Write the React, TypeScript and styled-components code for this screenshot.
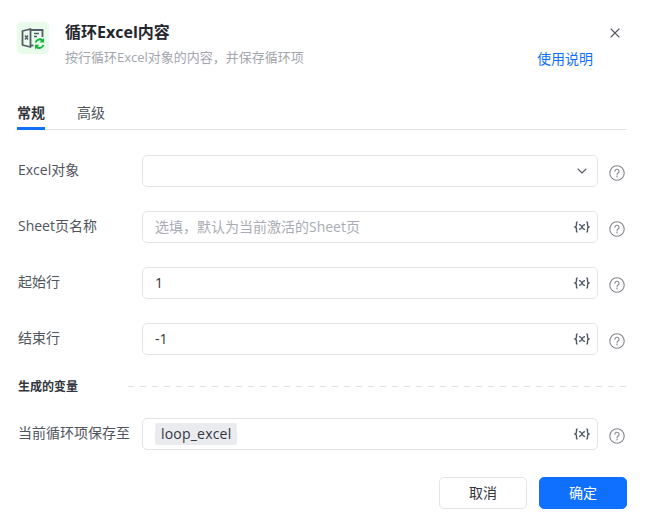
import React from "react"
import styled, { createGlobalStyle } from "styled-components"
import { ChevronDown, X } from "lucide-react"

const GlobalStyle = createGlobalStyle`
	html, body {
		margin: 0;
		padding: 0;
		background: #fff;
	}
	* {
		box-sizing: border-box;
	}
	body {
		font-family: "Open Sans", "Noto Sans CJK SC", sans-serif;
	}
`

const Dialog = styled.div`
	width: 646px;
	height: 524px;
	padding: 22px 19px 0 17px;
	background: #fff;
	overflow: hidden;
`

const Header = styled.div`
	display: flex;
	height: 47px;
`

const AppIcon = styled.div`
	width: 32px;
	height: 32px;
	border-radius: 5px;
	background: #e9fbea;
	display: flex;
`

const HeaderText = styled.div`
	margin-left: 16px;
	flex: 1;
`

const Title = styled.div`
	margin-top: -1px;
	font-size: 16px;
	line-height: 22px;
	font-weight: 700;
	color: #24272e;
`

const Description = styled.div`
	margin-top: 5px;
	font-size: 13px;
	line-height: 18px;
	color: #a3a6ae;
`

const HeaderSide = styled.div`
	width: 90px;
	display: flex;
	flex-direction: column;
	align-items: flex-end;
`

const CloseButton = styled.div`
	height: 22px;
	margin-top: 1px;
	color: #565b66;
	margin-right: 4px;
	display: flex;
	align-items: center;
`

const HelpLink = styled.a`
	margin-top: 6px;
	margin-right: 34px;
	font-size: 14px;
	line-height: 20px;
	color: #0f6fff;
	white-space: nowrap;
`

const Tabs = styled.div`
	margin-top: 26px;
	display: flex;
	gap: 32px;
	height: 35px;
	border-bottom: 1px solid #e4e5e9;
`

const Tab = styled.div<{ $active?: boolean }>`
	height: 35px;
	font-size: 14px;
	line-height: 20px;
	padding-top: 8px;
	font-weight: ${(p) => (p.$active ? 700 : 400)};
	color: ${(p) => (p.$active ? "#33363d" : "#50545c")};
	border-bottom: 3px solid ${(p) => (p.$active ? "#0f6fff" : "transparent")};
`

const Form = styled.div`
	margin-top: 25px;
`

const Row = styled.div`
	display: flex;
	align-items: center;
	height: 32px;
	margin-bottom: 24px;
`

const Label = styled.div`
	width: 124px;
	margin-left: 1px;
	margin-bottom: 4px;
	flex-shrink: 0;
	font-size: 14px;
	color: #50545c;
	white-space: nowrap;
`

const Field = styled.div`
	width: 456px;
	height: 32px;
	padding: 0 7px 0 12px;
	display: flex;
	align-items: center;
	justify-content: space-between;
	border: 1px solid #e4e5ea;
	border-radius: 5px;
	font-size: 14px;
	color: #33363d;
`

const Value = styled.span`
	margin-bottom: 2px;
`

const Placeholder = styled(Value)`
	color: #a9acb4;
`

const VarIcon = styled.span`
	width: 16px;
	height: 16px;
	display: flex;
	align-items: center;
	justify-content: center;
	color: #4c5665;
	margin-left: auto;
`

const ChevronWrap = styled.span`
	color: #565b66;
	margin-left: auto;
	display: flex;
`

const Help = styled.span`
	margin-left: 11px;
	display: flex;
	margin-top: 3px;
`

const Section = styled.div`
	display: flex;
	align-items: center;
	height: 20px;
	margin-top: -3px;
	margin-bottom: 22px;
`

const SectionTitle = styled.div`
	width: 110px;
	margin-left: 1px;
	font-size: 12px;
	font-weight: 700;
	color: #33363d;
`

const Dashes = styled.div`
	flex: 1;
	height: 1px;
	background: repeating-linear-gradient(to right, #e2e3e8 0 6px, transparent 6px 12px);
`

const Tag = styled.span`
	height: 22px;
	padding: 0 6px;
	background: #e9ebef;
	border-radius: 3px;
	font-size: 14px;
	line-height: 22px;
	letter-spacing: 0.2px;
	color: #33363d;
`

const Footer = styled.div`
	margin-top: 27px;
	display: flex;
	justify-content: flex-end;
	gap: 12px;
`

const Button = styled.button<{ $primary?: boolean }>`
	width: 88px;
	height: 32px;
	padding: 0 0 2px;
	font-family: inherit;
	font-size: 14px;
	border-radius: 5px;
	border: 1px solid ${(p) => (p.$primary ? "#0f6fff" : "#e4e5ea")};
	background: ${(p) => (p.$primary ? "#0f6fff" : "#fff")};
	color: ${(p) => (p.$primary ? "#fff" : "#33363d")};
`

const ExcelLoopIcon = () => (
	<svg width="32" height="32" viewBox="0 0 32 32" fill="none">
		<path d="M5.5 9 L13.5 7 V25 L5.5 23 Z" stroke="#565b66" strokeWidth="1.8" strokeLinejoin="round" />
		<path d="M13.5 8 H25.5 V15" stroke="#565b66" strokeWidth="1.8" />
		<path d="M13.5 23.5 H16.5" stroke="#565b66" strokeWidth="1.8" />
		<path d="M8 13.5 L11 17.5 M11 13.5 L8 17.5" stroke="#565b66" strokeWidth="1.4" />
		<path d="M17 11.5 H22 M17 14.5 H20" stroke="#565b66" strokeWidth="1.4" />
		<path d="M18.6 20.5 A4.4 4.4 0 0 1 25.6 18.4" stroke="#12b53c" strokeWidth="2" />
		<path d="M27 16 V20.6 H22.6 Z" fill="#12b53c" />
		<path d="M26.4 23 A4.4 4.4 0 0 1 19.4 25" stroke="#12b53c" strokeWidth="2" />
		<path d="M18 27.4 V22.8 H22.4 Z" fill="#12b53c" />
	</svg>
)

const VariableIcon = () => (
	<svg width="16" height="16" viewBox="0 0 16 16" fill="none" stroke="currentColor" strokeWidth="1.4">
		<path d="M3.6 3 C2.2 3 2.5 4.2 2.5 5.8 C2.5 7 2.2 7.6 1.2 8 C2.2 8.4 2.5 9 2.5 10.2 C2.5 11.8 2.2 13 3.6 13" />
		<path d="M12.4 3 C13.8 3 13.5 4.2 13.5 5.8 C13.5 7 13.8 7.6 14.8 8 C13.8 8.4 13.5 9 13.5 10.2 C13.5 11.8 13.8 13 12.4 13" />
		<path d="M5 5.8 C6.6 5.2 7 6.4 8 8 C9 9.6 9.4 10.8 11 10.2 M11 5.8 C9.6 5.4 8.8 6.4 8 8 C7.2 9.6 6.4 10.6 5 10.2" strokeWidth="1.3" />
	</svg>
)

const HelpIcon = () => (
	<svg width="16" height="16" viewBox="0 0 16 16" fill="none" stroke="#83868d" strokeWidth="1.1">
		<circle cx="8" cy="8" r="7.2" />
		<path d="M5.9 6.3 A2.1 2.1 0 1 1 8.9 8.2 C8.2 8.6 8 9 8 9.9" strokeLinecap="round" />
		<circle cx="8" cy="11.7" r="0.7" fill="#83868d" stroke="none" />
	</svg>
)

interface FieldRowProps {
	label: string
	children: React.ReactNode
}

const FieldRow: React.FC<FieldRowProps> = ({ label, children }) => (
	<Row>
		<Label>{label}</Label>
		<Field>{children}</Field>
		<Help>
			<HelpIcon />
		</Help>
	</Row>
)

const App: React.FC = () => {
	return (
		<Dialog>
			<GlobalStyle />
			<Header>
				<AppIcon>
					<ExcelLoopIcon />
				</AppIcon>
				<HeaderText>
					<Title>循环Excel内容</Title>
					<Description>按行循环Excel对象的内容，并保存循环项</Description>
				</HeaderText>
				<HeaderSide>
					<CloseButton>
						<X size={16} strokeWidth={1.6} />
					</CloseButton>
					<HelpLink>使用说明</HelpLink>
				</HeaderSide>
			</Header>
			<Tabs>
				<Tab $active>常规</Tab>
				<Tab>高级</Tab>
			</Tabs>
			<Form>
				<FieldRow label="Excel对象">
					<ChevronWrap>
						<ChevronDown size={16} strokeWidth={1.6} />
					</ChevronWrap>
				</FieldRow>
				<FieldRow label="Sheet页名称">
					<Placeholder>选填，默认为当前激活的Sheet页</Placeholder>
					<VarIcon>
						<VariableIcon />
					</VarIcon>
				</FieldRow>
				<FieldRow label="起始行">
					<Value>1</Value>
					<VarIcon>
						<VariableIcon />
					</VarIcon>
				</FieldRow>
				<FieldRow label="结束行">
					<Value>-1</Value>
					<VarIcon>
						<VariableIcon />
					</VarIcon>
				</FieldRow>
				<Section>
					<SectionTitle>生成的变量</SectionTitle>
					<Dashes />
				</Section>
				<FieldRow label="当前循环项保存至">
					<Tag>loop_excel</Tag>
					<VarIcon>
						<VariableIcon />
					</VarIcon>
				</FieldRow>
			</Form>
			<Footer>
				<Button>取消</Button>
				<Button $primary>确定</Button>
			</Footer>
		</Dialog>
	)
}

export default App
